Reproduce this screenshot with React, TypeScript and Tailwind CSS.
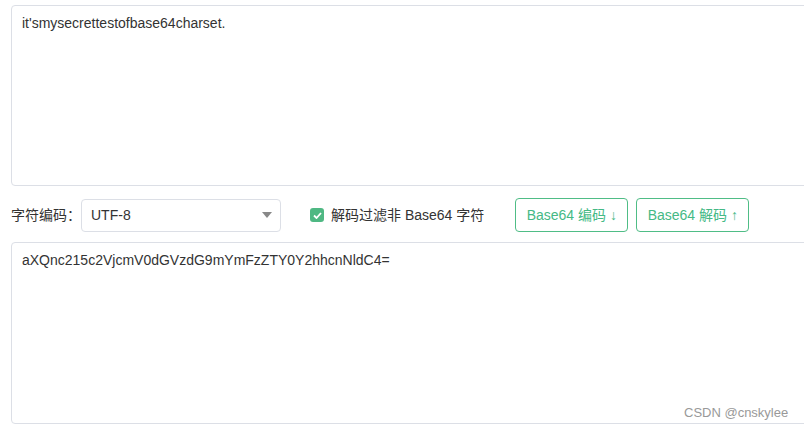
import React, { useState } from 'react';

// Base64 编解码工具 — 上下两个文本框 + 中间操作栏

const FONT = '"Liberation Sans", Arial, "Noto Sans CJK SC", sans-serif';

function Toolbar() {
  const [filter, setFilter] = useState(true);

  return (
    <div className="flex items-center h-[34px] mt-[12px]">
      <span className="text-[14px] text-[#333]">字符编码：</span>

      {/* 下拉框 */}
      <div className="w-[200px] h-[33px] border border-[#dcdfe6] rounded-[4px] bg-white flex items-center justify-between pl-[9px] pr-[7px]">
        <span className="text-[14px] text-[#333]">UTF-8</span>
        <svg width="10" height="6" viewBox="0 0 10 6" className="mr-[1px]">
          <path d="M0 0 L10 0 L5 6 Z" fill="#888" />
        </svg>
      </div>

      {/* 过滤复选框 */}
      <label className="ml-[29px] flex items-center cursor-pointer" onClick={() => setFilter(!filter)}>
        <span className="w-[14px] h-[14px] rounded-[3px] bg-[#4fb883] flex items-center justify-center">
          {filter && (
            <svg width="9" height="7" viewBox="0 0 9 7">
              <path d="M1 3.5 L3.5 6 L8 1" stroke="#fff" strokeWidth="1.8" fill="none" />
            </svg>
          )}
        </span>
        <span className="ml-[7px] text-[14px] text-[#333]">解码过滤非 Base64 字符</span>
      </label>

      <button className="ml-[31px] h-[34px] w-[113px] border border-[#4fbd86] rounded-[4px] text-[14px] text-[#45b985] bg-white">
        Base64 编码 ↓
      </button>
      <button className="ml-[8px] h-[34px] w-[113px] border border-[#4fbd86] rounded-[4px] text-[14px] text-[#45b985] bg-white">
        Base64 解码 ↑
      </button>
    </div>
  );
}

export default function App() {
  const [src, setSrc] = useState("it'smysecrettestofbase64charset.");
  const [out, setOut] = useState('aXQnc215c2VjcmV0dGVzdG9mYmFzZTY0Y2hhcnNldC4=');

  return (
    <div className="w-[804px] h-[428px] overflow-hidden bg-white pl-[11px] pt-[5px] relative" style={{ fontFamily: FONT }}>
      <textarea
        value={src}
        onChange={(e) => setSrc(e.target.value)}
        className="block w-[820px] h-[181px] border border-[#dcdfe6] rounded-[4px] px-[10px] py-[7px] text-[14px] text-[#333] resize-none outline-none"
      />

      <Toolbar />

      <textarea
        value={out}
        onChange={(e) => setOut(e.target.value)}
        className="block mt-[10px] w-[820px] h-[182px] border border-[#dcdfe6] rounded-[4px] px-[10px] py-[7px] text-[14px] text-[#333] resize-none outline-none"
      />

      {/* 水印 */}
      <span className="absolute left-[684px] top-[403px] text-[13px] text-[#999]">CSDN @cnskylee</span>
    </div>
  );
}
